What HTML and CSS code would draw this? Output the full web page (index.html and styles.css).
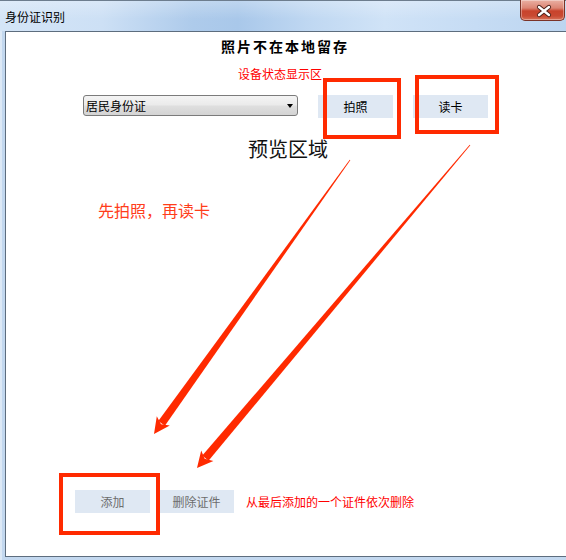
FILE: index.html
```html
<!DOCTYPE html>
<html lang="zh-CN">
<head>
<meta charset="utf-8">
<title>身份证识别</title>
<link rel="stylesheet" href="styles.css">
</head>
<body>
<div class="window">
  <div class="titlebar">
    <span class="title">身份证识别</span>
    <div class="close">
      <svg width="45" height="21" viewBox="0 0 45 21">
        <path d="M18 7 L28 15 M28 7 L18 15" stroke="#4a1f18" stroke-width="4.2" stroke-linecap="round" fill="none"/>
        <path d="M18 7 L28 15 M28 7 L18 15" stroke="#ffffff" stroke-width="2.4" stroke-linecap="round" fill="none"/>
      </svg>
    </div>
  </div>
  <div class="client">
    <div class="heading">照片不在本地留存</div>
    <div class="status">设备状态显示区</div>
    <div class="controls">
      <div class="combo"><span class="combo-text">居民身份证</span><i class="caret"></i></div>
      <button class="btn">拍照</button>
      <button class="btn">读卡</button>
    </div>
    <div class="preview">预览区域</div>
    <div class="hint">先拍照，再读卡</div>
    <div class="bottom">
      <button class="btn disabled">添加</button>
      <button class="btn disabled">删除证件</button>
      <span class="note">从最后添加的一个证件依次删除</span>
    </div>
  </div>

  <div class="mark mark-photo"></div>
  <div class="mark mark-read"></div>
  <div class="mark mark-add"></div>
  <svg class="arrows" width="566" height="560" viewBox="0 0 566 560">
    <polygon fill="#ff2a00" points="350.3,160.2 164.9,425.7 158.3,421.1 349.7,159.8"/>
    <polygon fill="#ff2a00" points="154,434 169.8,425.6 161.0,424.2 156.8,416.3"/>
    <polygon fill="#ff2a00" points="470.3,145.3 208.5,460.7 202.3,455.5 469.7,144.7"/>
    <polygon fill="#ff2a00" points="197,468 213.4,460.9 204.7,458.8 201.2,450.6"/>
  </svg>
</div>
</body>
</html>
```

FILE: styles.css
```css
* { box-sizing: border-box; }

html, body {
  margin: 0;
  padding: 0;
  background: #ffffff;
}

body {
  font-family: "Noto Sans CJK SC", "Noto Sans", sans-serif;
  font-size: 12px;
  color: #000;
}

.window {
  position: relative;
  width: 566px;
  height: 560px;
  overflow: hidden;
  background: linear-gradient(to right, #dde9f6 0, #dde9f6 2px, #c3d8ef 2px, #c3d8ef 100%);
}

.titlebar {
  height: 31px;
  border-top: 1px solid #6d7d8e;
  display: flex;
  justify-content: space-between;
  align-items: flex-start;
  background:
    linear-gradient(to bottom, rgba(255,255,255,0.25), rgba(255,255,255,0) 60%),
    linear-gradient(to right, #d4e5f7 0%, #cde0f5 18%, #aecbeb 34%, #a9c8ea 42%, #c0d8f2 55%, #d0e3f7 68%, #c6dcf4 84%, #bcd5f0 100%);
}

.title {
  padding: 9px 0 0 5px;
  line-height: 14px;
  font-size: 12px;
  color: #000;
}

.close {
  width: 45px;
  height: 21px;
  margin-right: 1px;
  margin-top: -1px;
  border: 1px solid #7a3328;
  border-top: none;
  border-radius: 0 0 5px 5px;
  background: linear-gradient(to bottom, #eab0a3 0%, #dc8574 40%, #c8432c 55%, #c94a32 80%, #d8735a 100%);
  box-shadow: inset 0 0 0 1px rgba(255,255,255,0.35);
}

.close svg { display: block; }

.client {
  margin-left: 5px;
  width: 600px;
  height: 526px;
  border: 1px solid #5d6d7e;
  border-right: none;
  background: #ffffff;
  display: flex;
  flex-direction: column;
  padding-bottom: 43px;
}

.heading {
  margin: 6px 0 0 215px;
  font-size: 14px;
  line-height: 16px;
  font-weight: bold;
  letter-spacing: 2px;
}

.status {
  margin: 13px 0 0 232px;
  font-size: 12px;
  line-height: 14px;
  color: #ff0000;
}

.controls {
  margin: 14px 0 0 77px;
  display: flex;
  align-items: flex-start;
  gap: 20px;
}

.combo {
  width: 215px;
  height: 21px;
  border: 1px solid #7b7b7b;
  border-radius: 3px;
  background: linear-gradient(to bottom, #f4f4f4 0%, #ebebeb 45%, #dedede 55%, #d4d4d4 100%);
  display: flex;
  align-items: center;
  justify-content: space-between;
  padding: 0 4px 0 2px;
}

.combo-text {
  font-size: 12px;
  line-height: 19px;
}

.caret {
  width: 0;
  height: 0;
  border-left: 3.5px solid transparent;
  border-right: 3.5px solid transparent;
  border-top: 4px solid #000;
  margin-top: 1px;
}

.btn {
  appearance: none;
  -webkit-appearance: none;
  width: 75px;
  height: 23px;
  border: 0;
  margin: 0;
  padding: 0;
  background: #dfe8f3;
  font-family: "Noto Sans CJK SC", "Noto Sans", sans-serif;
  font-size: 12px;
  line-height: 23px;
  color: #000;
  text-align: center;
}

.btn.disabled { color: #6d6d6d; }

.preview {
  margin: 20px 0 0 242px;
  font-size: 20px;
  line-height: 22px;
  color: #111;
}

.hint {
  margin: 41px 0 0 92px;
  font-size: 16px;
  line-height: 18px;
  color: #ff3d1a;
}

.bottom {
  margin: auto 0 0 69px;
  display: flex;
  align-items: center;
  gap: 9px;
}

.note {
  margin-left: 3px;
  font-size: 12px;
  line-height: 14px;
  color: #ff0000;
}

.mark {
  position: absolute;
  border: 4px solid #ff2a00;
}

.mark-photo { left: 323px; top: 78px; width: 78px; height: 61px; }
.mark-read  { left: 415px; top: 75px; width: 84px; height: 59px; }
.mark-add   { left: 59px;  top: 473px; width: 101px; height: 62px; }

.arrows {
  position: absolute;
  left: 0;
  top: 0;
  pointer-events: none;
}
```
